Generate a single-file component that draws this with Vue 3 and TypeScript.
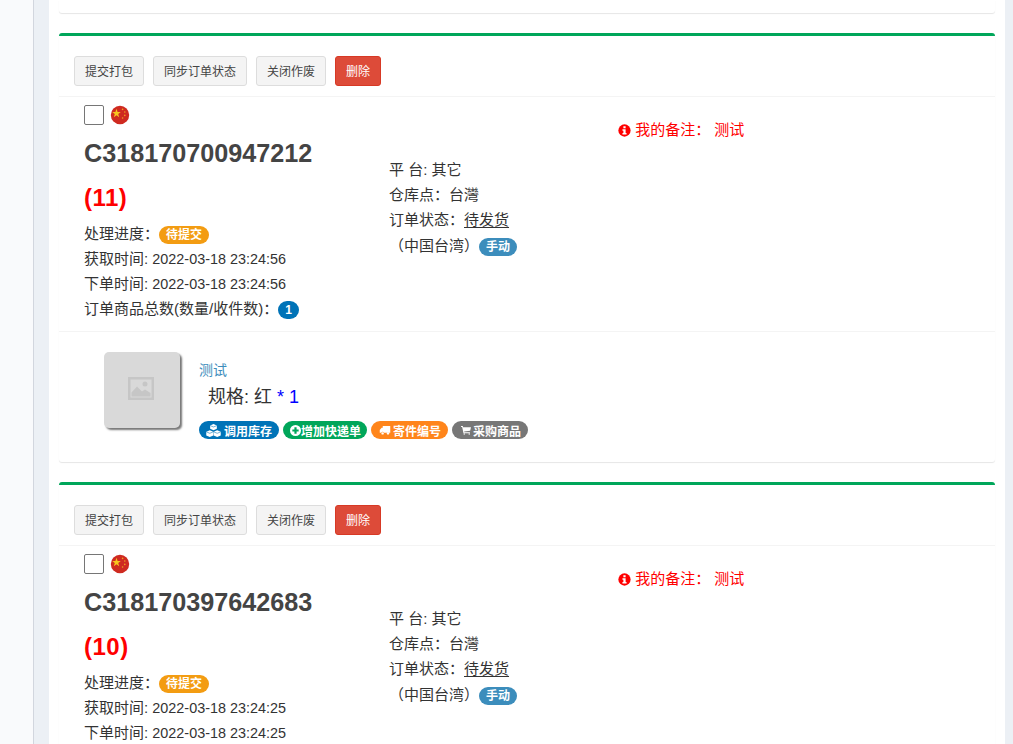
<script setup lang="ts">
interface Order { no: string; count: number; time: string }
const orders: Order[] = [
  { no: 'C318170700947212', count: 11, time: '2022-03-18 23:24:56' },
  { no: 'C318170397642683', count: 10, time: '2022-03-18 23:24:25' },
]
const actions = ['提交打包', '同步订单状态', '关闭作废']
</script>

<template>
  <div class="page">
    <aside class="side"></aside>
    <main class="main">
      <div class="content">
        <div class="stub"></div>
        <section v-for="o in orders" :key="o.no" class="box">
          <header class="head">
            <button v-for="a in actions" :key="a" class="btn">{{ a }}</button>
            <button class="btn danger">删除</button>
          </header>
          <div class="info">
            <div class="col col1">
              <div class="check-row">
                <span class="check"></span>
                <svg class="flag" viewBox="0 0 20 20" width="20" height="20">
                  <circle cx="10" cy="10" r="9.2" fill="#cf2a20" />
                  <polygon points="6.5,3.8 7.6,7 10.8,7 8.2,9 9.2,12.2 6.5,10.2 3.8,12.2 4.8,9 2.2,7 5.4,7" fill="#f7c51e" />
                  <circle cx="12.6" cy="4.4" r="0.8" fill="#f0a020" />
                  <circle cx="14.8" cy="7" r="0.8" fill="#f0a020" />
                  <circle cx="14.8" cy="10.4" r="0.8" fill="#f0a020" />
                  <circle cx="12.6" cy="13" r="0.8" fill="#f0a020" />
                </svg>
              </div>
              <h3 class="order-no">{{ o.no }}</h3>
              <div class="count">({{ o.count }})</div>
              <div class="line">处理进度：<span class="pill amber">待提交</span></div>
              <div class="line">获取时间: <span class="date">{{ o.time }}</span></div>
              <div class="line">下单时间: <span class="date">{{ o.time }}</span></div>
              <div class="line">订单商品总数(数量/收件数)：<span class="num">1</span></div>
            </div>
            <div class="col col2">
              <div class="line">平 台: 其它</div>
              <div class="line">仓库点：台灣</div>
              <div class="line">订单状态：<u>待发货</u></div>
              <div class="line last">（中国台湾）<span class="pill blue">手动</span></div>
            </div>
            <div class="col col3">
              <div class="line remark">
                <svg class="info-ico" viewBox="0 0 14 14" width="13" height="13">
                  <circle cx="7" cy="7" r="6.6" fill="#f00" />
                  <rect x="5.8" y="2.4" width="2.4" height="2.2" fill="#fff" />
                  <path d="M4.8 5.600h3.400v4.200h1v1.600H4.800V9.800h1V7.200h-1z" fill="#fff" />
                </svg>
                我的备注：<span class="remark-val">测试</span>
              </div>
            </div>
          </div>
          <div class="product">
            <div class="thumb">
              <svg viewBox="0 0 26 23" width="26" height="23">
                <rect x="1.250" y="1.250" width="23.500" height="20.500" fill="none" stroke="#c6c6c6" stroke-width="2.500" />
                <circle cx="17" cy="7" r="2.500" fill="#c6c6c6" />
                <path d="M3.500 19.500v-4l5.500-6 5 5 3-2 5.500 3.500v3.500z" fill="#c6c6c6" />
              </svg>
            </div>
            <div class="detail">
              <a class="title">测试</a>
              <div class="spec">规格: 红 <span class="qty">* 1</span></div>
              <div class="tags">
                <span class="tag t-blue">
                  <svg viewBox="0 0 16 14" width="15" height="13">
                    <path d="M8 0l3.600 1.500v3.700L8 6.800 4.400 5.200V1.500zM4 6.800l3.800 1.500v4L4 14 .2 12.300v-4zM12 6.800l3.800 1.500v4L12 14l-3.800-1.700v-4z" fill="#fff" />
                    <path d="M4.600 1.800 8 3.200l3.400-1.400M.4 8.500 4 10l3.600-1.500M8.400 8.500 12 10l3.600-1.500" fill="none" stroke="#0073b7" stroke-width=".6" />
                  </svg>
                  调用库存
                </span>
                <span class="tag t-green">
                  <svg viewBox="0 0 14 14" width="11" height="11">
                    <circle cx="7" cy="7" r="7" fill="#fff" />
                    <path d="M5.600 3h2.800v2.600H11v2.800H8.400V11H5.600V8.400H3V5.600h2.600z" fill="#00a65a" />
                  </svg>增加快递单
                </span>
                <span class="tag t-orange">
                  <svg viewBox="0 0 16 13" width="12" height="10">
                    <path d="M5 1h10v9H6.500a1.800 1.800 0 0 0-3.400 0H1V6.500L3.500 3.500H5z" fill="#fff" />
                    <circle cx="4.800" cy="11" r="1.600" fill="#fff" />
                    <circle cx="12" cy="11" r="1.600" fill="#fff" />
                  </svg>
                  寄件编号
                </span>
                <span class="tag t-gray">
                  <svg viewBox="0 0 14 13" width="10" height="10">
                    <path d="M0 1h2.500l.5 1.500H14l-1.200 5.200-8.400 1 .3 1H12.500v1.200H3.500L1.600 2.300H0z" fill="#fff" />
                    <circle cx="4.500" cy="12" r="1" fill="#fff" />
                    <circle cx="11.500" cy="12" r="1" fill="#fff" />
                  </svg>
                  采购商品
                </span>
              </div>
            </div>
          </div>
        </section>
      </div>
    </main>
  </div>
</template>

<style>
html, body { margin: 0; height: 744px; overflow: hidden; background: #ecf0f5; }
</style>

<style scoped>
.page {
  display: flex;
  height: 744px;
  overflow: hidden;
  font-family: "Liberation Sans", "Noto Sans CJK SC", sans-serif;
  font-size: 15px;
  color: #333;
}
.side { width: 33px; flex: none; background: #f9fafc; border-right: 1px solid #d2d6de; }
.main { flex: 1; min-width: 0; background: #ecf0f5; padding: 0 8px 0 15px; }
.content { background: #fff; padding: 0 10px; min-height: 100%; }
.stub {
  height: 13px;
  margin-bottom: 20px;
  border-radius: 0 0 3px 3px;
  box-shadow: 0 1px 1px rgba(0, 0, 0, 0.1);
}
.box {
  border-top: 3px solid #00a65a;
  border-radius: 3px;
  margin-bottom: 20px;
  box-shadow: 0 1px 1px rgba(0, 0, 0, 0.1);
}
.head {
  display: flex;
  gap: 9px;
  padding: 20px 15px 10px;
  border-bottom: 1px solid #f4f4f4;
}
.btn {
  height: 30px;
  padding: 0 10px 2px;
  font: inherit;
  font-size: 12px;
  color: #444;
  background: #f4f4f4;
  border: 1px solid #ddd;
  border-radius: 3px;
}
.btn.danger { background: #dd4b39; border-color: #d73925; color: #fff; }
.info {
  display: grid;
  grid-template-columns: 305px 229px 1fr;
  padding: 8px 10px 9px 25px;
  border-bottom: 1px solid #f4f4f4;
}
.col2 { padding-top: 52px; }
.col2 .line { line-height: 25px; }
.col2 .last { margin-top: 1px; }
.col3 { padding-top: 12px; }
.check-row { display: flex; align-items: center; gap: 7px; height: 20px; }
.check {
  width: 18px;
  height: 18px;
  border: 1px solid #767676;
  border-radius: 2px;
  background: #fff;
}
.flag { margin-left: -1px; }
.order-no {
  margin: 8px 0 5px;
  height: 40px;
  line-height: 40px;
  font-size: 25.2px;
  font-weight: 700;
  color: #444;
}
.count {
  height: 44px;
  line-height: 40px;
  font-size: 24px;
  font-weight: 700;
  letter-spacing: 0.5px;
  color: #f00;
}
.line { height: 25px; line-height: 23px; white-space: nowrap; }
.date { font-size: 14.4px; }
u { text-underline-offset: 2px; }
.pill {
  display: inline-block;
  height: 18px;
  line-height: 18px;
  padding: 0 7px;
  border-radius: 9px;
  font-size: 12px;
  font-weight: 700;
  color: #fff;
  vertical-align: middle;
}
.amber { background: #f39c12; }
.blue { background: #3c8dbc; }
.num {
  display: inline-block;
  width: 21px;
  height: 18px;
  line-height: 18px;
  border-radius: 9px;
  background: #0073b7;
  color: #fff;
  font-size: 12px;
  font-weight: 700;
  text-align: center;
  vertical-align: middle;
}
.remark { color: #f00; line-height: 25px; }
.info-ico { vertical-align: -2px; }
.remark-val { margin-left: 4px; }
.product { display: flex; gap: 19px; padding: 20px 35px 23px 45px; }
.thumb {
  box-sizing: border-box;
  width: 76px;
  height: 76px;
  flex: none;
  display: flex;
  align-items: center;
  justify-content: center;
  padding: 0 2px 3px 0;
  background: #d9d9d9;
  border-radius: 5px;
  box-shadow: 2px 2px 2px #777;
}
.detail { padding-top: 9px; }
.title { display: block; height: 18px; line-height: 18px; font-size: 14px; color: #3c8dbc; }
.spec { height: 35px; line-height: 37px; padding-left: 9px; font-size: 18px; }
.qty { color: #00f; }
.tags { display: flex; gap: 4px; margin-top: 7px; }
.tag {
  display: flex;
  align-items: center;
  gap: 3px;
  height: 18px;
  padding: 0 7px;
  border-radius: 9px;
  font-size: 12px;
  font-weight: 700;
  color: #fff;
  white-space: nowrap;
}
.t-blue { background: #0073b7; }
.t-green { background: #00a65a; gap: 0; padding: 0 6px 0 7px; }
.t-orange { background: #ff851b; gap: 2px; padding: 0 7px 0 8px; }
.t-gray { background: #777; gap: 2px; padding: 0 7px 0 9px; }
</style>
